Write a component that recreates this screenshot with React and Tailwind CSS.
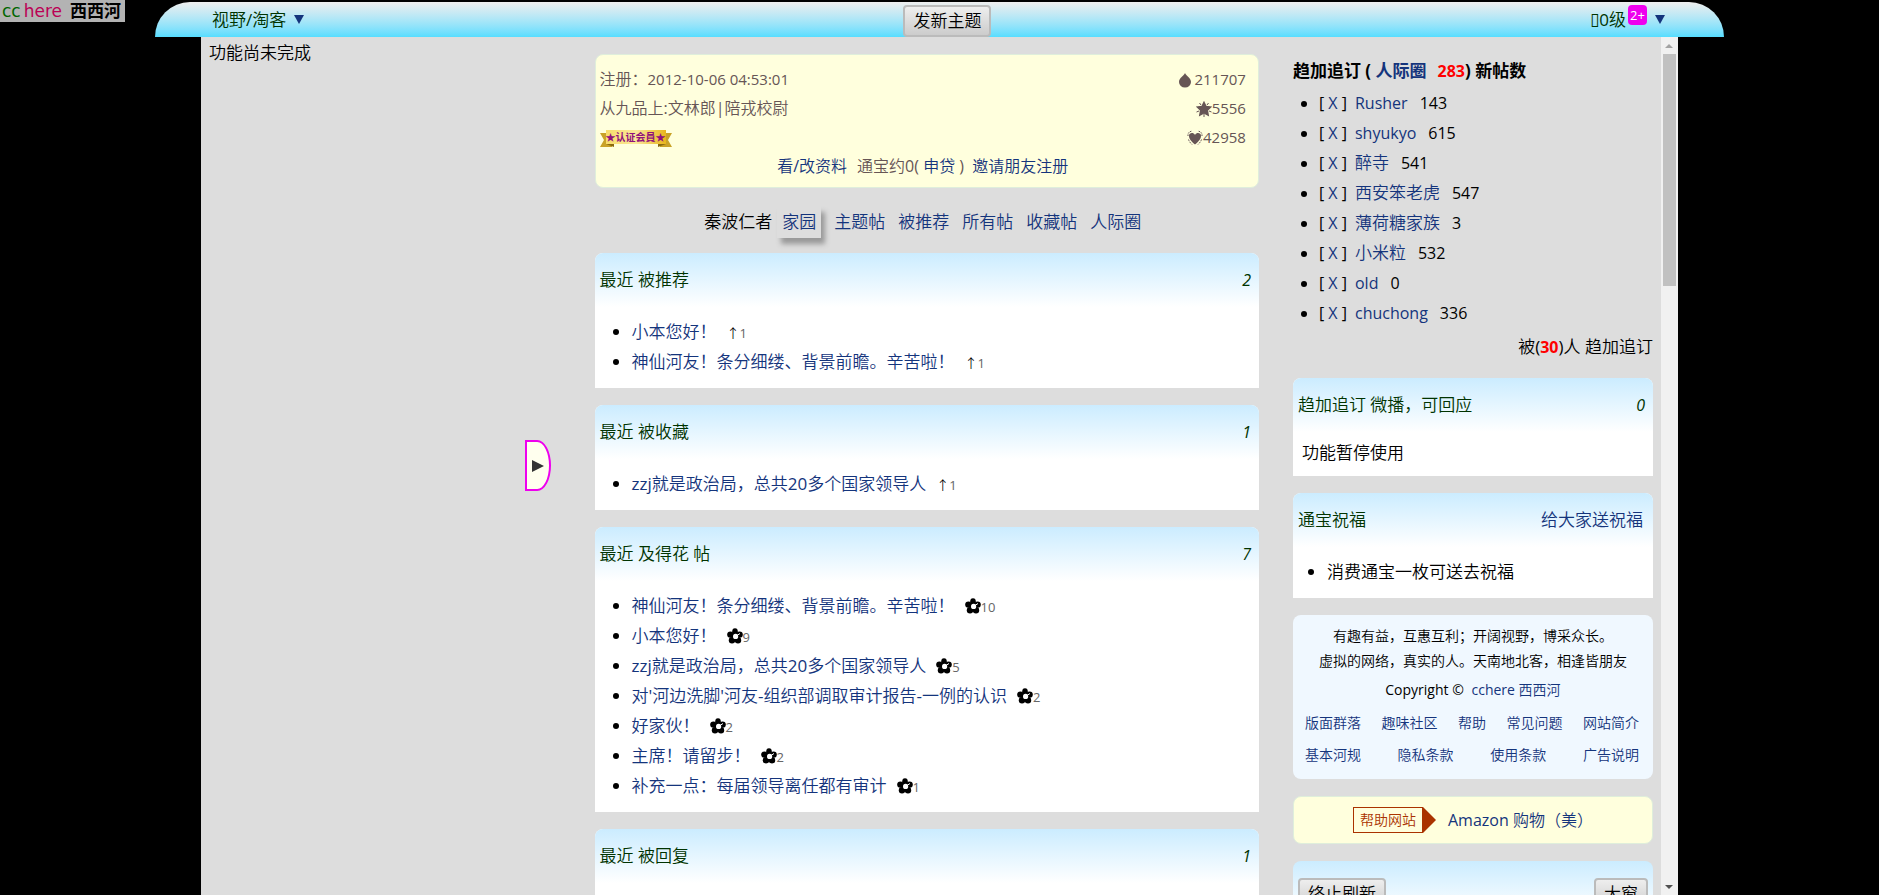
import React from 'react';

const LINK = 'text-[#14347c] hover:underline';

const tabs = ['主题帖', '被推荐', '所有帖', '收藏帖', '人际圈'];

const cards = [
  {
    title: '最近 被推荐',
    count: 2,
    kind: 'up',
    items: [
      ['小本您好！', 1],
      ['神仙河友！条分细缕、背景前瞻。辛苦啦！', 1],
    ],
  },
  {
    title: '最近 被收藏',
    count: 1,
    kind: 'up',
    items: [['zzj就是政治局，总共20多个国家领导人', 1]],
  },
  {
    title: '最近 及得花 帖',
    count: 7,
    kind: 'flower',
    items: [
      ['神仙河友！条分细缕、背景前瞻。辛苦啦！', 10],
      ['小本您好！', 9],
      ['zzj就是政治局，总共20多个国家领导人', 5],
      ["对'河边洗脚'河友-组织部调取审计报告-一例的认识", 2],
      ['好家伙！', 2],
      ['主席！请留步！', 2],
      ['补充一点：每届领导离任都有审计', 1],
    ],
  },
  {
    title: '最近 被回复',
    count: 1,
    kind: 'up',
    items: [],
  },
];

const follows = [
  ['Rusher', 143],
  ['shyukyo', 615],
  ['醉寺', 541],
  ['西安笨老虎', 547],
  ['薄荷糖家族', 3],
  ['小米粒', 532],
  ['old', 0],
  ['chuchong', 336],
];

const footerLinks = [
  ['版面群落', '趣味社区', '帮助', '常见问题', '网站简介'],
  ['基本河规', '隐私条款', '使用条款', '广告说明'],
];

const Flower = () => (
  <svg viewBox="0 0 16 16" className="inline-block h-4 w-4 align-[-2px]">
    <ellipse cx="8" cy="3.6" rx="2.8" ry="3.4" />
    <circle cx="12.6" cy="6.6" r="3.2" />
    <circle cx="11" cy="12.2" r="3.2" />
    <circle cx="5" cy="12.2" r="3.2" />
    <circle cx="3.4" cy="6.6" r="3.2" />
    <circle cx="8" cy="8.2" r="3" />
    <circle cx="8.6" cy="8.4" r="2.6" fill="#fff" />
    <path d="M10 7.5l3-2" stroke="#fff" strokeWidth="1" />
  </svg>
);

const Drop = () => (
  <svg viewBox="0 0 14 16" fill="#655" className="h-4 w-3.5">
    <path d="M7 1C8 3.500 13 6 13 10a6 5.500 0 0 1-12 0C1 6 6 3.500 7 1z" />
  </svg>
);

const Star = () => (
  <svg viewBox="0 0 16 16" fill="#655" className="h-4 w-4">
    <path d="M8 1.5l2 4 4.6.6-3.3 3.2.8 4.7L8 11.8 3.9 14l.8-4.7L1.4 6.1 6 5.5z" stroke="#655" strokeWidth="1.6" />
    <path d="M3.500 2l1.500 2M12.500 2l-1.500 2M.5 11l2.500-1M15.500 11l-2.500-1M8 13v3" stroke="#655" strokeWidth="1" />
  </svg>
);

const Heart = () => (
  <svg viewBox="0 0 16 16" fill="#655" className="h-4 w-4">
    <path d="M8 14.500C3.500 11 2 8.500 2 5.800 2 2.500 6.500 2 8 5c1.500-3 6-2.500 6 .8C14 8.500 12.500 11 8 14.500z" />
    <path
      d="M1 6C.6 3 2.500 1.200 5 1.200M15 6c.4-3-1.500-4.800-4-4.800M1.500 9.500c.6 2 2 3.500 3.500 5M14.500 9.500c-.6 2-2 3.500-3.500 5"
      fill="none"
      stroke="#655"
      strokeDasharray="1.500 1"
    />
  </svg>
);

const MemberBadge = () => (
  <span className="relative mt-0.5 flex h-[17px] w-[72px] items-center justify-center">
    <svg viewBox="0 0 72 17" className="absolute inset-0 h-full w-full">
      <path d="M0 3h12v14H0l4-7z" fill="#c9a227" />
      <path d="M72 3H60v14h12l-4-7z" fill="#c9a227" />
      <path d="M6 14h8v3z" fill="#8a6a10" />
      <path d="M66 14h-8v3z" fill="#8a6a10" />
      <rect x="6" y="0" width="60" height="14" fill="url(#gold)" />
      <defs>
        <linearGradient id="gold">
          <stop offset="0" stopColor="#f7dc6a" />
          <stop offset="0.5" stopColor="#fbe99a" />
          <stop offset="1" stopColor="#e9b51c" />
        </linearGradient>
      </defs>
    </svg>
    <span className="relative pb-[3px] font-['Noto_Sans_CJK_SC',sans-serif] text-[10px] font-bold leading-none text-[#90107c]">★认证会員★</span>
  </span>
);

const GreyButton = ({ children }) => (
  <button className="h-8 rounded border-2 border-[#bbb] bg-linear-to-b from-[#eee] to-[#ccc] px-2 leading-7 text-black">
    {children}
  </button>
);

const Panel = ({ title, right, children }) => (
  <section className="mb-[17px] rounded-t-lg bg-white">
    <header className="flex h-[54px] items-center justify-between rounded-t-lg bg-linear-to-b from-[#cbecff] to-white pb-px pl-[5px] pr-2 text-[#030]">
      <h2>{title}</h2>
      {right}
    </header>
    {children}
  </section>
);

const ListCard = ({ card }) => (
  <Panel title={card.title} right={<i className="text-base">{card.count}</i>}>
    <ul className="list-disc pb-[11px] pl-[37px] pt-2.5">
      {card.items.map(([text, n]) => (
        <li key={text} className="h-[30px] leading-[30px]">
          <a href="#" className={LINK}>{text}</a>
          <span className="ml-2.5 text-[13px] text-[#666]">
            {card.kind === 'flower' ? <Flower /> : <span className="text-black">↑</span>}
            {n}
          </span>
        </li>
      ))}
    </ul>
  </Panel>
);

const TopBar = () => (
  <header className="mx-auto mt-0.5 grid h-[35px] w-[83.5%] shrink-0 grid-cols-3 items-center rounded-t-[35px] bg-linear-to-b from-[#eee] to-[#5df] text-[#030]">
    <div className="flex items-center gap-2 pl-[57px]">
      视野/淘客
      <button aria-label="展开版面" className="h-0 w-0 border-x-[5px] border-t-[9px] border-x-transparent border-t-[#14347c]" />
    </div>
    <div className="flex justify-center pl-4 pt-[3px]">
      <GreyButton>发新主题</GreyButton>
    </div>
    <div className="flex items-center justify-end pr-[59px]">
      <span className="font-['DejaVu_Sans'] text-[17px]">▯</span>0级
      <span className="mb-2.5 ml-0.5 h-5 w-[19px] rounded bg-[#e0e] text-center text-[13px] leading-5 text-white">2+</span>
      <button aria-label="展开账户" className="ml-2 h-0 w-0 border-x-[5px] border-t-[9px] border-x-transparent border-t-[#14347c]" />
    </div>
  </header>
);

const Profile = () => (
  <section className="rounded-lg border border-[#dfeedb] bg-[#ffd] pb-1.5 pl-1 pr-3 pt-2.5 text-base leading-[29px] text-[#655]">
    <div className="flex justify-between">
      <span>注册：<span className="text-[15px]">2012-10-06 04:53:01</span></span>
      <span className="flex items-center gap-0.5 text-[15px]"><Drop />211707</span>
    </div>
    <div className="flex justify-between">
      <span>从九品上:文林郎|陪戎校尉</span>
      <span className="flex items-center text-[15px]"><Star />5556</span>
    </div>
    <div className="flex items-center justify-between">
      <MemberBadge />
      <span className="flex items-center text-[15px]"><Heart />42958</span>
    </div>
    <p className="text-center">
      <a href="#" className={LINK}>看/改资料</a>
      <span className="ml-2.5">通宝约0( </span>
      <a href="#" className={LINK}>申贷</a> ){' '}
      <a href="#" className="ml-1 text-[#14347c] hover:underline">邀请朋友注册</a>
    </p>
  </section>
);

const Following = () => (
  <section className="mb-4">
    <h2 className="pt-[3px] font-['Open_Sans','Noto_Sans_CJK_SC',sans-serif] font-bold leading-[26px]">
      趋加追订 ( <a href="#" className={LINK}>人际圈</a>
      <span className="ml-[11px] text-base text-[#f00]">283</span>) 新帖数
    </h2>
    <ul className="list-disc pl-[26px] pt-1">
      {follows.map(([name, n]) => (
        <li key={name} className="h-[30px] text-base leading-[30px]">
          [ <a href="#" className={LINK}>X</a> ]
          <a href="#" className={/^\w+$/.test(name) ? 'ml-2 mr-3 text-base text-[#14347c] hover:underline' : 'ml-2 mr-3 text-[17px] text-[#14347c] hover:underline'}>
            {name}
          </a>
          {n}
        </li>
      ))}
    </ul>
    <p className="pt-1 text-right leading-[30px]">
      被(<b className="text-base font-bold text-[#f00]">30</b>)人 趋加追订
    </p>
  </section>
);

const SiteFooter = () => (
  <footer className="mb-[17px] rounded-lg bg-[#f0f8ff] px-3 pb-2 pt-2 text-sm">
    <p className="text-center leading-[25px]">有趣有益，互惠互利；开阔视野，博采众长。</p>
    <p className="text-center leading-[25px]">虚拟的网络，真实的人。天南地北客，相逢皆朋友</p>
    <p className="text-center leading-[34px]">
      Copyright © <a href="#" className="ml-1 text-[#14347c] hover:underline">cchere 西西河</a>
    </p>
    {footerLinks.map((row) => (
      <nav key={row[0]} className="flex justify-between pr-0.5 leading-8">
        {row.map((text) => (
          <a key={text} href="#" className={LINK}>{text}</a>
        ))}
      </nav>
    ))}
  </footer>
);

const Scrollbar = () => (
  <div className="flex w-[17px] shrink-0 flex-col items-center bg-[#f1f1f1]">
    <span className="my-1.5 h-[5px] border-x-[4px] border-b-[4px] border-x-transparent border-b-[#a3a3a3]" />
    <span className="h-[27%] w-[13px] bg-[#c1c1c1]" />
    <span className="mb-1.5 mt-auto border-x-[4px] border-t-[4px] border-x-transparent border-t-[#505050]" />
  </div>
);

export default function App() {
  return (
    <div className="relative flex h-screen flex-col overflow-hidden bg-black font-['Open_Sans','Noto_Sans_CJK_SC_DemiLight','Noto_Sans_CJK_SC',sans-serif] text-[17px] font-normal text-black">
      <a href="#" className="absolute left-0 top-0 flex h-[22px] items-center bg-[#b3b3b3] pl-0.5 pr-1 font-['DejaVu_Sans','Noto_Sans_CJK_SC',sans-serif] leading-[22px]">
        <span className="text-[#060]">cc</span>
        <span className="ml-[3px] text-[#b05]">here</span>
        <b className="ml-2">西西河</b>
      </a>

      <TopBar />

      <div className="mx-auto flex min-h-0 w-[78.6%] grow bg-[#ddd]">
        <div className="grid min-w-0 grow grid-cols-[27.1%_1fr_360px] overflow-hidden pr-2">
          <aside className="relative pl-2 pt-1 leading-6">
            功能尚未完成
            <button
              aria-label="展开侧栏"
              className="absolute left-[324px] top-[403px] flex h-[51px] w-[26px] items-center justify-center rounded-r-[14px_26px] border-2 border-[#e0e] bg-[#ffe]"
            >
              <span className="border-y-[6px] border-l-[12px] border-y-transparent border-l-[#333]" />
            </button>
          </aside>

          <main className="mr-[34px] pt-[17px]">
            <Profile />
            <nav className="flex h-[65px] items-center justify-center gap-[13px] pr-2 pt-[3px]">
              <span className="flex items-center gap-[5px]">
                秦波仁者
                <a href="#" className="h-8 bg-[#ddd] px-[5px] leading-8 text-[#14347c] shadow-[4px_6px_5px_#999]">家园</a>
              </span>
              {tabs.map((text) => (
                <a key={text} href="#" className={LINK}>{text}</a>
              ))}
            </nav>
            {cards.map((card) => (
              <ListCard key={card.title} card={card} />
            ))}
          </main>

          <aside className="pt-[18px]">
            <Following />
            <Panel title="趋加追订 微播，可回应" right={<i className="text-base">0</i>}>
              <p className="pb-2 pl-[9px] pt-1.5 leading-[30px]">功能暂停使用</p>
            </Panel>
            <Panel title="通宝祝福" right={<a href="#" className="pr-0.5 text-[#14347c] hover:underline">给大家送祝福</a>}>
              <ul className="list-disc pb-[11px] pl-[34px] pt-2.5">
                <li className="leading-[30px]">消费通宝一枚可送去祝福</li>
              </ul>
            </Panel>
            <SiteFooter />
            <section className="mb-[17px] flex h-[48px] items-center justify-center rounded-lg border border-[#dfeedb] bg-[#ffd] text-base">
              <span className="h-[26px] border border-[#a30] px-1.5 text-sm leading-6 text-[#a30]">帮助网站</span>
              <span className="mr-3 border-y-[13px] border-l-[13px] border-y-transparent border-l-[#a30]" />
              <a href="#" className={LINK}>Amazon 购物（美）</a>
            </section>
            <section className="flex h-[120px] justify-between rounded-t-lg bg-linear-to-b from-[#cbecff] to-white to-[54px] px-[5px] pt-[17px]">
              <GreyButton>终止刷新</GreyButton>
              <GreyButton>大窗</GreyButton>
            </section>
          </aside>
        </div>
        <Scrollbar />
      </div>
    </div>
  );
}
